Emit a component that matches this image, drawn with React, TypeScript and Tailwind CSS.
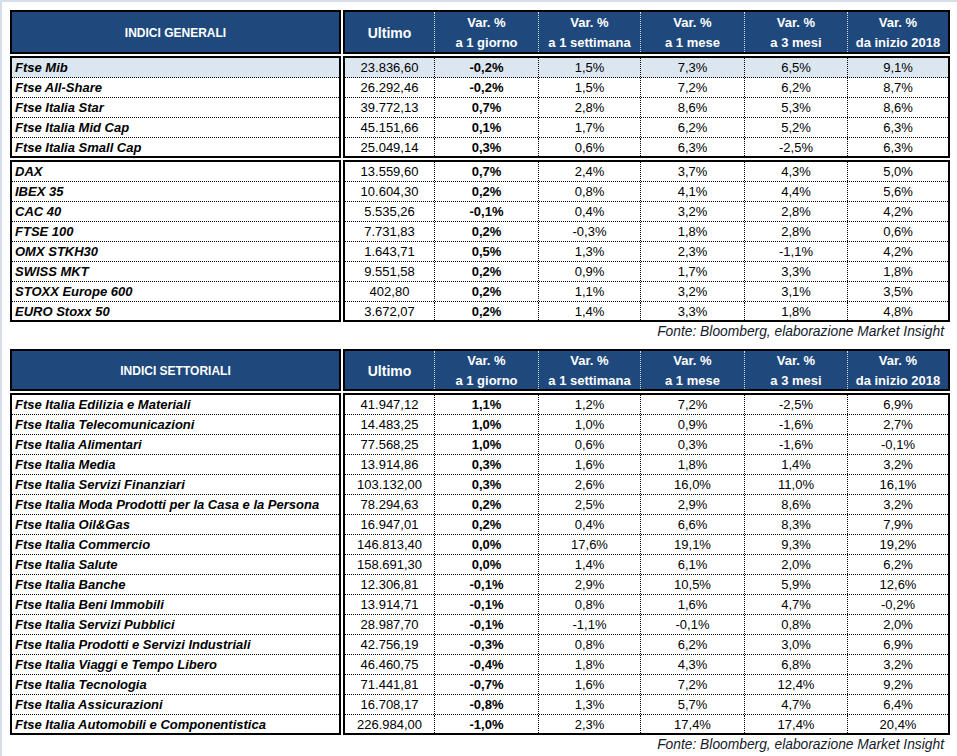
import React from "react";

// Excel-style market tables: general indices + sector indices

type Row = { name: string; last: string; vals: string[]; hl?: boolean };

const COLS = [
  { w: "w-[90px]", top: "", bottom: "Ultimo" },
  { w: "w-[104px]", top: "Var. %", bottom: "a 1 giorno" },
  { w: "w-[102px]", top: "Var. %", bottom: "a 1 settimana" },
  { w: "w-[104px]", top: "Var. %", bottom: "a 1 mese" },
  { w: "w-[103px]", top: "Var. %", bottom: "a 3 mesi" },
  { w: "w-[100px]", top: "Var. %", bottom: "da inizio 2018" },
];

const ITALIA: Row[] = [
  { name: "Ftse Mib", last: "23.836,60", vals: ["-0,2%", "1,5%", "7,3%", "6,5%", "9,1%"], hl: true },
  { name: "Ftse All-Share", last: "26.292,46", vals: ["-0,2%", "1,5%", "7,2%", "6,2%", "8,7%"] },
  { name: "Ftse Italia Star", last: "39.772,13", vals: ["0,7%", "2,8%", "8,6%", "5,3%", "8,6%"] },
  { name: "Ftse Italia Mid Cap", last: "45.151,66", vals: ["0,1%", "1,7%", "6,2%", "5,2%", "6,3%"] },
  { name: "Ftse Italia Small Cap", last: "25.049,14", vals: ["0,3%", "0,6%", "6,3%", "-2,5%", "6,3%"] },
];

const ESTERO: Row[] = [
  { name: "DAX", last: "13.559,60", vals: ["0,7%", "2,4%", "3,7%", "4,3%", "5,0%"] },
  { name: "IBEX 35", last: "10.604,30", vals: ["0,2%", "0,8%", "4,1%", "4,4%", "5,6%"] },
  { name: "CAC 40", last: "5.535,26", vals: ["-0,1%", "0,4%", "3,2%", "2,8%", "4,2%"] },
  { name: "FTSE 100", last: "7.731,83", vals: ["0,2%", "-0,3%", "1,8%", "2,8%", "0,6%"] },
  { name: "OMX STKH30", last: "1.643,71", vals: ["0,5%", "1,3%", "2,3%", "-1,1%", "4,2%"] },
  { name: "SWISS MKT", last: "9.551,58", vals: ["0,2%", "0,9%", "1,7%", "3,3%", "1,8%"] },
  { name: "STOXX Europe 600", last: "402,80", vals: ["0,2%", "1,1%", "3,2%", "3,1%", "3,5%"] },
  { name: "EURO Stoxx 50", last: "3.672,07", vals: ["0,2%", "1,4%", "3,3%", "1,8%", "4,8%"] },
];

const SETTORI: Row[] = [
  { name: "Ftse Italia Edilizia e Materiali", last: "41.947,12", vals: ["1,1%", "1,2%", "7,2%", "-2,5%", "6,9%"] },
  { name: "Ftse Italia Telecomunicazioni", last: "14.483,25", vals: ["1,0%", "1,0%", "0,9%", "-1,6%", "2,7%"] },
  { name: "Ftse Italia Alimentari", last: "77.568,25", vals: ["1,0%", "0,6%", "0,3%", "-1,6%", "-0,1%"] },
  { name: "Ftse Italia Media", last: "13.914,86", vals: ["0,3%", "1,6%", "1,8%", "1,4%", "3,2%"] },
  { name: "Ftse Italia Servizi Finanziari", last: "103.132,00", vals: ["0,3%", "2,6%", "16,0%", "11,0%", "16,1%"] },
  { name: "Ftse Italia Moda Prodotti per la Casa e la Persona", last: "78.294,63", vals: ["0,2%", "2,5%", "2,9%", "8,6%", "3,2%"] },
  { name: "Ftse Italia Oil&Gas", last: "16.947,01", vals: ["0,2%", "0,4%", "6,6%", "8,3%", "7,9%"] },
  { name: "Ftse Italia Commercio", last: "146.813,40", vals: ["0,0%", "17,6%", "19,1%", "9,3%", "19,2%"] },
  { name: "Ftse Italia Salute", last: "158.691,30", vals: ["0,0%", "1,4%", "6,1%", "2,0%", "6,2%"] },
  { name: "Ftse Italia Banche", last: "12.306,81", vals: ["-0,1%", "2,9%", "10,5%", "5,9%", "12,6%"] },
  { name: "Ftse Italia Beni Immobili", last: "13.914,71", vals: ["-0,1%", "0,8%", "1,6%", "4,7%", "-0,2%"] },
  { name: "Ftse Italia Servizi Pubblici", last: "28.987,70", vals: ["-0,1%", "-1,1%", "-0,1%", "0,8%", "2,0%"] },
  { name: "Ftse Italia Prodotti e Servizi Industriali", last: "42.756,19", vals: ["-0,3%", "0,8%", "6,2%", "3,0%", "6,9%"] },
  { name: "Ftse Italia Viaggi e Tempo Libero", last: "46.460,75", vals: ["-0,4%", "1,8%", "4,3%", "6,8%", "3,2%"] },
  { name: "Ftse Italia Tecnologia", last: "71.441,81", vals: ["-0,7%", "1,6%", "7,2%", "12,4%", "9,2%"] },
  { name: "Ftse Italia Assicurazioni", last: "16.708,17", vals: ["-0,8%", "1,3%", "5,7%", "4,7%", "6,4%"] },
  { name: "Ftse Italia Automobili e Componentistica", last: "226.984,00", vals: ["-1,0%", "2,3%", "17,4%", "17,4%", "20,4%"] },
];

function Header({ title, tall }: { title: string; tall?: boolean }) {
  const h = tall ? "h-[44px]" : "h-[42px]";
  return (
    <div className={`flex gap-[2px] ${h}`}>
      <div className="flex w-[331px] items-center justify-center border-2 border-black bg-[#1f497d] pt-[2px] text-[12px] font-bold text-white">
        {title}
      </div>
      <div className="flex w-[607px] border-2 border-black bg-[#1f497d] text-[13px] font-bold text-white">
        {COLS.map((c, i) => (
          <div
            key={i}
            className={`flex ${c.w} flex-col items-center justify-center pt-[2px] leading-[20px] ${
              i < COLS.length - 1 ? "border-r border-dotted border-white/80" : ""
            }`}
          >
            {c.top ? (
              <>
                <span>{c.top}</span>
                <span>{c.bottom}</span>
              </>
            ) : (
              <span className="text-[14px]">{c.bottom}</span>
            )}
          </div>
        ))}
      </div>
    </div>
  );
}

function Group({ rows }: { rows: Row[] }) {
  return (
    <div className="flex gap-[2px] text-[13px] text-black">
      {/* names */}
      <div className="w-[331px] border-2 border-black">
        {rows.map((r, i) => {
          const last = i === rows.length - 1;
          return (
            <div
              key={r.name}
              className={`pl-[3px] font-bold italic leading-[20px] ${
                last ? "h-[18px]" : "h-[20px] border-b border-dotted border-black"
              } ${r.hl ? "bg-[#dce6f1]" : ""}`}
            >
              {r.name}
            </div>
          );
        })}
      </div>
      {/* numbers */}
      <div className="w-[607px] border-2 border-black">
        {rows.map((r, i) => {
          const last = i === rows.length - 1;
          const cells = [r.last, ...r.vals];
          return (
            <div
              key={r.name}
              className={`flex ${last ? "h-[18px]" : "h-[20px] border-b border-dotted border-black"} ${
                r.hl ? "bg-[#dce6f1]" : ""
              }`}
            >
              {cells.map((v, j) => (
                <div
                  key={j}
                  className={`${COLS[j].w} text-center leading-[20px] ${j === 1 ? "font-bold" : ""} ${
                    j < cells.length - 1 ? "border-r border-dotted border-black" : ""
                  }`}
                >
                  {v}
                </div>
              ))}
            </div>
          );
        })}
      </div>
    </div>
  );
}

function Source({ h }: { h: string }) {
  return (
    <div className={`${h} pr-[6px] text-right text-[13.8px] italic leading-[20px] text-[#141a2a]`}>
      Fonte: Bloomberg, elaborazione Market Insight
    </div>
  );
}

export default function App() {
  return (
    <div className="h-[756px] w-[957px] overflow-hidden border-l-2 border-t-2 border-[#d5deea] bg-white pl-[8px] pt-[8px] font-['Liberation_Sans',Arial,sans-serif]">
      <div className="flex w-[940px] flex-col">
        <div className="flex flex-col gap-[2px]">
          <Header title="INDICI GENERALI" tall />
          <Group rows={ITALIA} />
          <Group rows={ESTERO} />
        </div>
        <Source h="h-[27px]" />
        <div className="flex flex-col gap-[2px]">
          <Header title="INDICI SETTORIALI" />
          <Group rows={SETTORI} />
        </div>
        <Source h="h-[20px]" />
      </div>
    </div>
  );
}
